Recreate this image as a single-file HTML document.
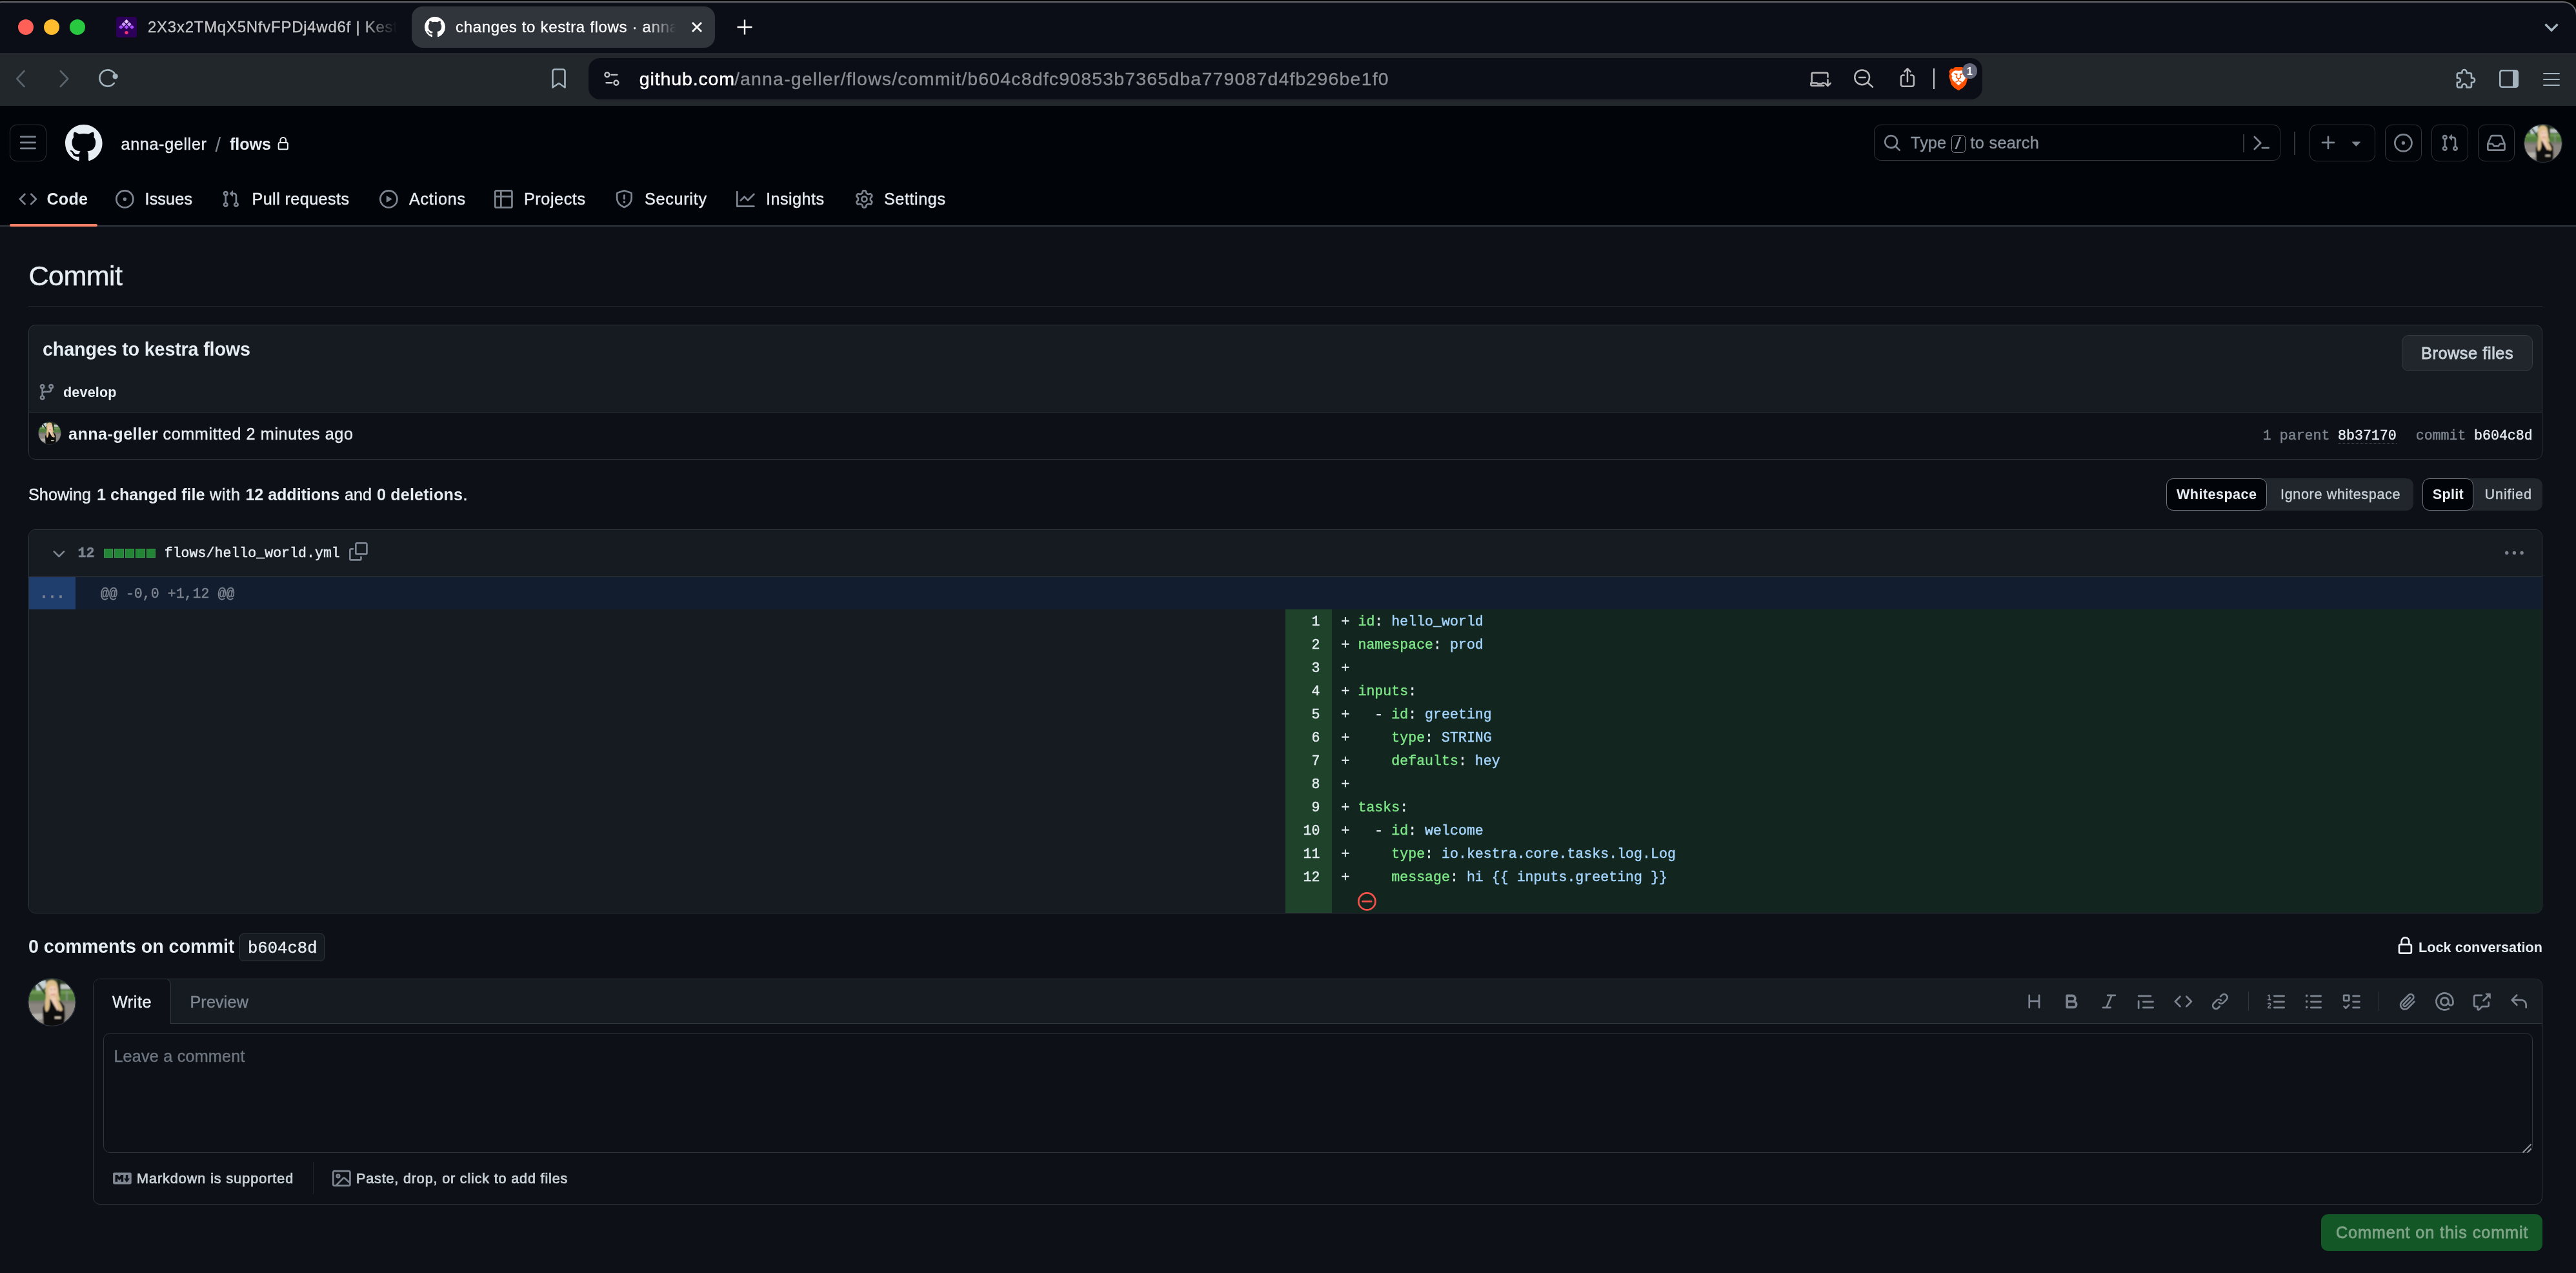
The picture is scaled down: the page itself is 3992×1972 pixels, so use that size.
<!DOCTYPE html>
<html lang="en"><head><meta charset="utf-8"><title>changes to kestra flows · anna-geller/flows@b604c8d</title>
<style>
html,body{margin:0;padding:0;background:#0d1117;}
body{width:3992px;height:1972px;overflow:hidden;position:relative;font-family:"Liberation Sans", Arial, sans-serif;color:#e6edf3;-webkit-font-smoothing:antialiased;}
#root{will-change:transform;position:absolute;left:0;top:0;width:3992px;height:1972px;overflow:hidden;background:#0d1117;}
#root div,#root .i,#root .t{position:absolute;box-sizing:border-box;}
.t{white-space:pre;margin:0;padding:0;font-weight:400;display:block;}
.m{font-family:"Liberation Mono", "DejaVu Sans Mono", monospace;-webkit-text-stroke:0.42px currentColor;}
.i{display:block;overflow:visible;}
</style></head>
<body><div id="root">
<section class="browser-chrome">
<div class="tabbar" style="left:0px;top:0px;width:3992px;height:82px;background:#0b0e16;"></div>
<div style="left:0px;top:0px;width:3992px;height:2px;background:#000;"></div>
<div style="left:0px;top:2px;width:3992px;height:2px;background:#66686e;"></div>
<div style="left:-9px;top:2px;width:47px;height:40px;border-top:2px solid #66686e;border-left:2px solid #66686e;border-top-left-radius:12px;background:#0b0e16;box-shadow:-10px -10px 0 10px #000;"></div>
<div style="left:3954px;top:2px;width:40px;height:40px;border-top:2px solid #66686e;border-right:2px solid #66686e;border-top-right-radius:22px;background:#0b0e16;box-shadow:10px -10px 0 10px #000;"></div>
<div class="toolbar" style="left:0px;top:82px;width:3992px;height:82px;background:#22272b;"></div>
<div style="left:28px;top:30px;width:24px;height:24px;background:#fe5f57;border-radius:50%;"></div>
<div style="left:68px;top:30px;width:24px;height:24px;background:#febc2e;border-radius:50%;"></div>
<div style="left:108px;top:30px;width:24px;height:24px;background:#28c840;border-radius:50%;"></div>
<svg class="i" style="left:180px;top:26px" width="32" height="32" viewBox="0 0 32 32"><rect width="32" height="32" rx="3.5" fill="#2c0059"/><g transform="translate(16 0)"><rect x="-2.45" y="-2.45" width="4.9" height="4.9" rx="0.5" transform="translate(0 7.4) rotate(45)" fill="#e5c8ff"/><rect x="-2.45" y="-2.45" width="4.9" height="4.9" rx="0.5" transform="translate(-4.3 11.7) rotate(45)" fill="#cd9bff"/><rect x="-2.45" y="-2.45" width="4.9" height="4.9" rx="0.5" transform="translate(4.3 11.7) rotate(45)" fill="#cd9bff"/><rect x="-2.45" y="-2.45" width="4.9" height="4.9" rx="0.5" transform="translate(-8.5 16) rotate(45)" fill="#a950ff"/><rect x="-2.45" y="-2.45" width="4.9" height="4.9" rx="0.5" transform="translate(0 16) rotate(45)" fill="#a950ff"/><rect x="-2.45" y="-2.45" width="4.9" height="4.9" rx="0.5" transform="translate(8.5 16) rotate(45)" fill="#a950ff"/><circle cx="0" cy="24.6" r="2.6" fill="#f62e76"/></g></svg>
<span id="t0" class="t" style="top:29.68px;font-size:24px;line-height:24px;color:#c6c7c9;left:229px;-webkit-text-stroke:0.3px #c6c7c9;letter-spacing:0.737px;">2X3x2TMqX5NfvFPDj4wd6f | Kest</span>
<div style="left:560px;top:20px;width:60px;height:44px;background:linear-gradient(90deg,rgba(11,14,22,0),#0b0e16 92%);"></div>
<div class="tab-active" style="left:638px;top:10px;width:470px;height:64px;background:#2f353b;border-radius:17px;"></div>
<svg class="i" style="left:658px;top:26px" width="32" height="32" viewBox="0 0 16 16" fill="#fff"><path d="M8 0c4.42 0 8 3.58 8 8a8.013 8.013 0 0 1-5.45 7.59c-.4.08-.55-.17-.55-.38 0-.27.01-1.13.01-2.2 0-.75-.25-1.23-.54-1.48 1.78-.2 3.65-.88 3.65-3.95 0-.88-.31-1.59-.82-2.15.08-.2.36-1.02-.08-2.12 0 0-.67-.22-2.2.82-.64-.18-1.32-.27-2-.27-.68 0-1.36.09-2 .27-1.53-1.03-2.2-.82-2.2-.82-.44 1.1-.16 1.92-.08 2.12-.51.56-.82 1.28-.82 2.15 0 3.06 1.86 3.75 3.64 3.95-.23.2-.44.55-.51 1.07-.46.21-1.61.55-2.33-.66-.15-.24-.6-.83-1.23-.82-.67.01-.27.38.01.53.34.19.73.9.82 1.13.16.45.68 1.31 2.69.94 0 .67.01 1.3.01 1.49 0 .21-.15.45-.55.38A7.995 7.995 0 0 1 0 8c0-4.42 3.58-8 8-8Z"/></svg>
<span id="t1" class="t" style="top:29.68px;font-size:24px;line-height:24px;color:#fff;left:706px;-webkit-text-stroke:0.3px #fff;letter-spacing:0.672px;">changes to kestra flows · anna</span>
<div style="left:1000px;top:20px;width:52px;height:44px;background:linear-gradient(90deg,rgba(47,53,59,0),#2f353b 92%);"></div>
<svg class="i" style="left:1070px;top:32px" width="20" height="20" viewBox="0 0 20 20"><path d="M3 3 17 17M17 3 3 17" stroke="#fff" stroke-width="2.800" fill="none"/></svg>
<svg class="i" style="left:1141px;top:29px" width="26" height="26" viewBox="0 0 26 26"><path d="M13 1.5V24.5M1.5 13H24.5" stroke="#fff" stroke-width="2.400" fill="none"/></svg>
<svg class="i" style="left:3942px;top:35px" width="24" height="16" viewBox="0 0 24 16"><path d="M2.5 2.5 12 12 21.500 2.500" stroke="#a4b4be" stroke-width="3.4" fill="none"/></svg>
<svg class="i" style="left:22px;top:106px" width="20" height="32" viewBox="0 0 20 32"><path d="M15.5 4 4.2 16 15.5 28" stroke="#59646c" stroke-width="2.6" fill="none" stroke-linejoin="round" stroke-linecap="round"/></svg>
<svg class="i" style="left:90px;top:106px" width="20" height="32" viewBox="0 0 20 32"><path d="M3.8 4 15.2 16 3.8 28" stroke="#59646c" stroke-width="2.600" fill="none" stroke-linejoin="round" stroke-linecap="round"/></svg>
<svg class="i" style="left:150px;top:104.3px" width="34" height="34" viewBox="0 0 34 34"><path d="M29.250 14.060A12.600 12.600 0 1 0 26.900 24.800" stroke="#a4b4be" stroke-width="2.600" fill="none" stroke-linecap="round"/><circle cx="28.600" cy="14.300" r="4.100" fill="#a4b4be"/></svg>
<svg class="i" style="left:853px;top:105px" width="26" height="34" viewBox="0 0 26 34"><path d="M3.500 5.500a3 3 0 0 1 3-3h13a3 3 0 0 1 3 3V30.500L13 24 3.500 30.500Z" stroke="#a4b4be" stroke-width="2.600" fill="none" stroke-linejoin="round"/></svg>
<div class="urlbar" style="left:912px;top:90px;width:2160px;height:64px;background:#0b0e16;border-radius:18px;"></div>
<svg class="i" style="left:934px;top:108px" width="28" height="28" viewBox="0 0 28 28"><g stroke="#c3c6cb" stroke-width="2.300" fill="none" stroke-linecap="round"><circle cx="6.900" cy="7.800" r="3.500"/><path d="M13.300 7.800H22.500"/><circle cx="20.900" cy="20.250" r="3.500"/><path d="M5.400 20.250H14.500"/></g></svg>
<span id="t2" class="t" style="top:107.67px;font-size:28.5px;line-height:28.5px;color:#fff;left:990.8px;-webkit-text-stroke:0.5px #fff;letter-spacing:0.864px;">github.com</span>
<span id="t3" class="t" style="top:107.67px;font-size:28.5px;line-height:28.5px;color:#8b8e94;left:1138px;-webkit-text-stroke:0.35px #8b8e94;letter-spacing:1.162px;">/anna-geller/flows/commit/b604c8dfc90853b7365dba779087d4fb296be1f0</span>
<svg class="i" style="left:2790px;top:95px" width="200" height="55" viewBox="0 0 200 55"><g stroke="#b9b9bb" stroke-width="2.500" fill="none" stroke-linecap="round" stroke-linejoin="round"><path d="M17.700 31.500V19.700a2 2 0 0 1 2-2H40.500a2 2 0 0 1 2 2V24.600"/><path d="M16.300 33.400H25.600l1.500 1.400H33l1.500-1.400H36.300M16.300 33.400V35.800a2 2 0 0 0 2 2H36.300"/><path d="M42.500 28.400V37.600M38.200 33.900 42.500 38.200 46.800 33.900"/><circle cx="95.650" cy="24.800" r="11.400"/><path d="M91.100 25H100.600M104.200 33 112 39.700"/><path d="M160.700 21.400H159a3 3 0 0 0-3 3V35.800a3 3 0 0 0 3 3H172.900a3 3 0 0 0 3-3V24.400a3 3 0 0 0-3-3H171.200"/><path d="M165.950 31.200V11.600M161.200 16.200 165.950 11.400 170.700 16.200"/></g></svg>
<div style="left:2996px;top:106px;width:2.2px;height:32px;background:#c4c7c9;"></div>
<svg class="i" style="left:3020px;top:104px" width="30.4" height="36.3" viewBox="0 0 30.4 36.3"><path d="M15.200 0H21L23.500 2.800 27 2.200 30 6.500 29 10.500 30.200 14 26.500 27 22 32 15.200 36.300 8.400 32 3.900 27 0.200 14 1.400 10.500 0.400 6.500 3.400 2.200 6.900 2.800 9.400 0Z" fill="#ff5000"/><path d="M15.200 5.700 20.500 5.300 24 7 26.600 11 25 14.500 26 17 23.500 21 19.500 24.500 15.200 28.300 10.900 24.500 6.900 21 4.400 17 5.400 14.500 3.800 11 6.400 7 9.900 5.300Z" fill="#fff"/><path d="M7.800 9.300 13.600 10.300 13 12.800 9.600 11.600ZM22.600 9.300 16.800 10.300 17.400 12.800 20.800 11.600Z" fill="#ff5000"/><path d="M12.600 12.600 12 16.200 15.200 18.300 18.400 16.200 17.800 12.600M10.500 23.400 15.200 20.800 19.900 23.400M15.200 18.300V20.800" stroke="#ff5000" stroke-width="1.500" fill="none"/></svg>
<div style="left:3040.6px;top:98.2px;width:23.4px;height:23.4px;background:#646779;border-radius:50%;"></div>
<span id="t4" class="t" style="top:101.93px;font-size:16.5px;line-height:16.5px;color:#fff;left:3047.7px;font-weight:700;">1</span>
<svg class="i" style="left:3804.4px;top:104.3px" width="34.6" height="34.6" viewBox="0 0 32 32"><path d="M3.5 10.500a2 2 0 0 1 2-2h5v-1.500a3.250 3.250 0 0 1 6.500 0v1.500h5a2 2 0 0 1 2 2v5h1.500a3.250 3.250 0 0 1 0 6.500h-1.500v5a2 2 0 0 1-2 2h-5v-1.500a3.250 3.250 0 0 0-6.500 0v1.500h-5a2 2 0 0 1-2-2v-5h1.500a3.250 3.250 0 0 0 0-6.500h-1.500Z" stroke="#a4b4be" stroke-width="2.400" fill="none" stroke-linejoin="round"/></svg>
<svg class="i" style="left:3873px;top:108px" width="30" height="28" viewBox="0 0 30 28"><rect x="1.300" y="1.300" width="27.400" height="25.400" rx="3" stroke="#a4b4be" stroke-width="2.600" fill="none"/><path d="M21 1.500h5.500a2 2 0 0 1 2 2v21a2 2 0 0 1-2 2H21Z" fill="#a4b4be"/></svg>
<div style="left:3941px;top:112.7px;width:26px;height:2.6px;background:#a4b4be;border-radius:1.300px;"></div>
<div style="left:3941px;top:121.7px;width:26px;height:2.6px;background:#a4b4be;border-radius:1.300px;"></div>
<div style="left:3941px;top:130.7px;width:26px;height:2.6px;background:#a4b4be;border-radius:1.300px;"></div>
</section>
<header class="AppHeader">
<div class="AppHeader" style="left:0px;top:164px;width:3992px;height:187px;background:#010409;border-bottom:2px solid #30363d;"></div>
<div class="btn" style="left:15px;top:193px;width:57px;height:57px;border:1px solid #30363d;border-radius:10.8px;"></div>
<svg class="i" style="left:29.4px;top:207.4px" width="28.8" height="28.8" viewBox="0 0 16 16" fill="#7d8590"><path d="M1 2.75A.75.75 0 0 1 1.75 2h12.5a.75.75 0 0 1 0 1.5H1.75A.75.75 0 0 1 1 2.75Zm0 5A.75.75 0 0 1 1.75 7h12.5a.75.75 0 0 1 0 1.5H1.75A.75.75 0 0 1 1 7.75ZM1.75 12h12.5a.75.75 0 0 1 0 1.5H1.75a.75.75 0 0 1 0-1.5Z"/></svg>
<svg class="i" style="left:101px;top:193px" width="57.6" height="57.6" viewBox="0 0 16 16" fill="#e6edf3"><path d="M8 0c4.42 0 8 3.58 8 8a8.013 8.013 0 0 1-5.45 7.59c-.4.08-.55-.17-.55-.38 0-.27.01-1.13.01-2.2 0-.75-.25-1.23-.54-1.48 1.78-.2 3.65-.88 3.65-3.95 0-.88-.31-1.59-.82-2.15.08-.2.36-1.02-.08-2.12 0 0-.67-.22-2.2.82-.64-.18-1.32-.27-2-.27-.68 0-1.36.09-2 .27-1.53-1.03-2.2-.82-2.2-.82-.44 1.1-.16 1.92-.08 2.12-.51.56-.82 1.28-.82 2.15 0 3.06 1.86 3.75 3.64 3.95-.23.2-.44.55-.51 1.07-.46.21-1.61.55-2.33-.66-.15-.24-.6-.83-1.23-.82-.67.01-.27.38.01.53.34.19.73.9.82 1.13.16.45.68 1.31 2.69.94 0 .67.01 1.3.01 1.49 0 .21-.15.45-.55.38A7.995 7.995 0 0 1 0 8c0-4.42 3.58-8 8-8Z"/></svg>
<span id="t5" class="t" style="top:210.67px;font-size:25.2px;line-height:25.2px;color:#e6edf3;left:187.5px;-webkit-text-stroke:0.4px #e6edf3;letter-spacing:0.647px;">anna-geller</span>
<span id="t6" class="t" style="top:208.76px;font-size:31px;line-height:31px;color:#7d8590;left:333.6px;-webkit-text-stroke:0.01px #7d8590;">/</span>
<span id="t7" class="t" style="top:210.67px;font-size:25.2px;line-height:25.2px;color:#e6edf3;left:356px;font-weight:700;letter-spacing:-0.094px;">flows</span>
<svg class="i" style="left:428.3px;top:211.6px" width="21.6" height="21.6" viewBox="0 0 16 16" fill="#e6edf3"><path d="M4 4a4 4 0 0 1 8 0v2h.25c.966 0 1.75.784 1.75 1.75v5.5A1.75 1.75 0 0 1 12.25 15h-8.5A1.75 1.75 0 0 1 2 13.25v-5.5C2 6.784 2.784 6 3.75 6H4Zm8.25 3.5h-8.5a.25.25 0 0 0-.25.25v5.5c0 .138.112.25.25.25h8.5a.25.25 0 0 0 .25-.25v-5.5a.25.25 0 0 0-.25-.25ZM10.5 6V4a2.5 2.5 0 1 0-5 0v2Z"/></svg>
<svg class="i" style="left:29px;top:294.2px" width="28.8" height="28.8" viewBox="0 0 16 16" fill="#7d8590"><path d="m11.28 3.22 4.25 4.25a.75.75 0 0 1 0 1.06l-4.25 4.25a.749.749 0 0 1-1.275-.326.749.749 0 0 1 .215-.734L13.94 8l-3.72-3.72a.749.749 0 0 1 .326-1.275.749.749 0 0 1 .734.215Zm-6.56 0a.751.751 0 0 1 1.042.018.751.751 0 0 1 .018 1.042L2.06 8l3.72 3.72a.749.749 0 0 1-.326 1.275.749.749 0 0 1-.734-.215L.47 8.53a.75.75 0 0 1 0-1.06Z"/></svg>
<span id="t8" class="t" style="top:296.17px;font-size:25.2px;line-height:25.2px;color:#e6edf3;left:72.5px;font-weight:700;letter-spacing:0.177px;">Code</span>
<svg class="i" style="left:179px;top:294.2px" width="28.8" height="28.8" viewBox="0 0 16 16" fill="#7d8590"><path d="M8 9.5a1.5 1.5 0 1 0 0-3 1.5 1.5 0 0 0 0 3ZM8 0a8 8 0 1 1 0 16A8 8 0 0 1 8 0ZM1.5 8a6.5 6.5 0 1 0 13 0 6.5 6.5 0 0 0-13 0Z"/></svg>
<span id="t9" class="t" style="top:296.17px;font-size:25.2px;line-height:25.2px;color:#e6edf3;left:224.5px;-webkit-text-stroke:0.4px #e6edf3;letter-spacing:0.141px;">Issues</span>
<svg class="i" style="left:343px;top:294.2px" width="28.8" height="28.8" viewBox="0 0 16 16" fill="#7d8590"><path d="M1.5 3.25a2.25 2.25 0 1 1 3 2.122v5.256a2.251 2.251 0 1 1-1.5 0V5.372A2.25 2.25 0 0 1 1.5 3.25Zm5.677-.177L9.573.677A.25.25 0 0 1 10 .854V2.5h1A2.5 2.5 0 0 1 13.5 5v5.628a2.251 2.251 0 1 1-1.5 0V5a1 1 0 0 0-1-1h-1v1.646a.25.25 0 0 1-.427.177L7.177 3.427a.25.25 0 0 1 0-.354ZM3.75 2.5a.75.75 0 1 0 0 1.5.75.75 0 0 0 0-1.5Zm0 9.5a.75.75 0 1 0 0 1.5.75.75 0 0 0 0-1.5Zm8.25.75a.75.75 0 1 0 1.5 0 .75.75 0 0 0-1.5 0Z"/></svg>
<span id="t10" class="t" style="top:296.17px;font-size:25.2px;line-height:25.2px;color:#e6edf3;left:390.5px;-webkit-text-stroke:0.4px #e6edf3;letter-spacing:0.408px;">Pull requests</span>
<svg class="i" style="left:587.5px;top:294.2px" width="28.8" height="28.8" viewBox="0 0 16 16" fill="#7d8590"><path d="M8 0a8 8 0 1 1 0 16A8 8 0 0 1 8 0ZM1.5 8a6.5 6.5 0 1 0 13 0 6.5 6.5 0 0 0-13 0Zm4.879-2.773 4.264 2.559a.25.25 0 0 1 0 .428l-4.264 2.559A.25.25 0 0 1 6 10.559V5.442a.25.25 0 0 1 .379-.215Z"/></svg>
<span id="t11" class="t" style="top:296.17px;font-size:25.2px;line-height:25.2px;color:#e6edf3;left:634px;-webkit-text-stroke:0.4px #e6edf3;letter-spacing:0.732px;">Actions</span>
<svg class="i" style="left:765.5px;top:294.2px" width="28.8" height="28.8" viewBox="0 0 16 16" fill="#7d8590"><path d="M0 1.75C0 .784.784 0 1.75 0h12.5C15.216 0 16 .784 16 1.75v12.5A1.75 1.75 0 0 1 14.25 16H1.75A1.75 1.75 0 0 1 0 14.25ZM6.5 6.5v8h7.75a.25.25 0 0 0 .25-.25V6.5Zm8-1.5V1.75a.25.25 0 0 0-.25-.25H6.5V5Zm-13 1.5v7.75c0 .138.112.25.25.25H5v-8ZM5 5V1.5H1.75a.25.25 0 0 0-.25.25V5Z"/></svg>
<span id="t12" class="t" style="top:296.17px;font-size:25.2px;line-height:25.2px;color:#e6edf3;left:812px;-webkit-text-stroke:0.4px #e6edf3;letter-spacing:0.571px;">Projects</span>
<svg class="i" style="left:953px;top:294.2px" width="28.8" height="28.8" viewBox="0 0 16 16" fill="#7d8590"><path d="M7.467.133a1.748 1.748 0 0 1 1.066 0l5.25 1.68A1.75 1.75 0 0 1 15 3.48V7c0 1.566-.32 3.182-1.303 4.682-.983 1.498-2.585 2.813-5.032 3.855a1.697 1.697 0 0 1-1.33 0c-2.447-1.042-4.049-2.357-5.032-3.855C1.32 10.182 1 8.566 1 7V3.48a1.75 1.75 0 0 1 1.217-1.667Zm.61 1.429a.25.25 0 0 0-.153 0l-5.25 1.68a.25.25 0 0 0-.174.238V7c0 1.358.275 2.666 1.057 3.86.784 1.194 2.121 2.34 4.366 3.297a.196.196 0 0 0 .154 0c2.245-.956 3.582-2.104 4.366-3.298C13.225 9.666 13.5 8.36 13.5 7V3.48a.251.251 0 0 0-.174-.237l-5.25-1.68ZM8.75 4.75v3a.75.75 0 0 1-1.5 0v-3a.75.75 0 0 1 1.5 0ZM9 10.5a1 1 0 1 1-2 0 1 1 0 0 1 2 0Z"/></svg>
<span id="t13" class="t" style="top:296.17px;font-size:25.2px;line-height:25.2px;color:#e6edf3;left:999px;-webkit-text-stroke:0.4px #e6edf3;letter-spacing:0.714px;">Security</span>
<svg class="i" style="left:1140.5px;top:294.2px" width="28.8" height="28.8" viewBox="0 0 16 16" fill="#7d8590"><path d="M1.5 1.75V13.5h13.75a.75.75 0 0 1 0 1.5H.75a.75.75 0 0 1-.75-.75V1.75a.75.75 0 0 1 1.5 0Zm14.28 2.53-5.25 5.25a.75.75 0 0 1-1.06 0L7 7.06 4.28 9.78a.751.751 0 0 1-1.042-.018.751.751 0 0 1-.018-1.042l3.25-3.25a.75.75 0 0 1 1.06 0L10 7.94l4.72-4.72a.751.751 0 0 1 1.042.018.751.751 0 0 1 .018 1.042Z"/></svg>
<span id="t14" class="t" style="top:296.17px;font-size:25.2px;line-height:25.2px;color:#e6edf3;left:1187px;-webkit-text-stroke:0.4px #e6edf3;letter-spacing:0.455px;">Insights</span>
<svg class="i" style="left:1324.5px;top:294.2px" width="28.8" height="28.8" viewBox="0 0 16 16" fill="#7d8590"><path d="M8 0a8.2 8.2 0 0 1 .701.031C9.444.095 9.99.645 10.16 1.29l.288 1.107c.018.066.079.158.212.224.231.114.454.243.668.386.123.082.233.09.299.071l1.103-.303c.644-.176 1.392.021 1.82.63.27.385.506.792.704 1.218.315.675.111 1.422-.364 1.891l-.814.806c-.049.048-.098.147-.088.294.016.257.016.515 0 .772-.01.147.038.246.088.294l.814.806c.475.469.679 1.216.364 1.891a7.977 7.977 0 0 1-.704 1.217c-.428.61-1.176.807-1.82.63l-1.102-.302c-.067-.019-.177-.011-.3.071a5.909 5.909 0 0 1-.668.386c-.133.066-.194.158-.211.224l-.29 1.106c-.168.646-.715 1.196-1.458 1.26a8.006 8.006 0 0 1-1.402 0c-.743-.064-1.289-.614-1.458-1.26l-.289-1.106c-.018-.066-.079-.158-.212-.224a5.738 5.738 0 0 1-.668-.386c-.123-.082-.233-.09-.299-.071l-1.103.303c-.644.176-1.392-.021-1.82-.63a8.12 8.12 0 0 1-.704-1.218c-.315-.675-.111-1.422.363-1.891l.815-.806c.05-.048.098-.147.088-.294a6.214 6.214 0 0 1 0-.772c.01-.147-.038-.246-.088-.294l-.815-.806C.635 6.045.431 5.298.746 4.623a7.920 7.920 0 0 1 .704-1.217c.428-.61 1.176-.807 1.82-.63l1.102.302c.067.019.177.011.3-.071.214-.143.437-.272.668-.386.133-.066.194-.158.211-.224l.29-1.106C6.009.645 6.556.095 7.299.03 7.530.01 7.764 0 8 0Zm-.571 1.525c-.036.003-.108.036-.137.146l-.289 1.105c-.147.561-.549.967-.998 1.189-.173.086-.34.183-.5.29-.417.278-.97.423-1.529.27l-1.103-.303c-.109-.03-.175.016-.195.045-.22.312-.412.644-.573.99-.014.031-.021.11.059.19l.815.806c.411.406.562.957.53 1.456a4.709 4.709 0 0 0 0 .582c.032.499-.119 1.05-.53 1.456l-.815.806c-.081.08-.073.159-.059.19.162.346.353.677.573.989.02.03.085.076.195.046l1.102-.303c.56-.153 1.113-.008 1.53.27.161.107.328.204.501.29.447.222.85.629.997 1.189l.289 1.105c.029.109.101.143.137.146a6.600 6.600 0 0 0 1.142 0c.036-.003.108-.036.137-.146l.289-1.105c.147-.561.549-.967.998-1.189.173-.086.34-.183.5-.29.417-.278.97-.423 1.529-.27l1.103.303c.109.029.175-.016.195-.045.22-.313.411-.644.573-.99.014-.031.021-.11-.059-.19l-.815-.806c-.411-.406-.562-.957-.53-1.456a4.709 4.709 0 0 0 0-.582c-.032-.499.119-1.05.53-1.456l.815-.806c.081-.08.073-.159.059-.19a6.464 6.464 0 0 0-.573-.989c-.02-.03-.085-.076-.195-.046l-1.102.303c-.56.153-1.113.008-1.53-.27a4.440 4.440 0 0 0-.501-.29c-.447-.222-.85-.629-.997-1.189l-.289-1.105c-.029-.11-.101-.143-.137-.146a6.600 6.600 0 0 0-1.142 0ZM11 8a3 3 0 1 1-6 0 3 3 0 0 1 6 0ZM9.500 8a1.500 1.500 0 1 0-3.001.001A1.500 1.500 0 0 0 9.500 8Z"/></svg>
<span id="t15" class="t" style="top:296.17px;font-size:25.2px;line-height:25.2px;color:#e6edf3;left:1370px;-webkit-text-stroke:0.4px #e6edf3;letter-spacing:0.569px;">Settings</span>
<div style="left:15px;top:347px;width:136px;height:4px;background:#f78166;border-radius:3.6px;"></div>
<div class="search" style="left:2904px;top:193px;width:630px;height:55.6px;border:1px solid #30363d;border-radius:10.8px;"></div>
<svg class="i" style="left:2918px;top:207.4px" width="28.8" height="28.8" viewBox="0 0 16 16" fill="#7d8590"><path d="M10.68 11.74a6 6 0 0 1-7.922-8.982 6 6 0 0 1 8.982 7.922l3.04 3.04a.749.749 0 0 1-.326 1.275.749.749 0 0 1-.734-.215ZM11.5 7a4.499 4.499 0 1 0-8.997 0A4.499 4.499 0 0 0 11.5 7Z"/></svg>
<span id="t16" class="t" style="top:209.07px;font-size:25.2px;line-height:25.2px;color:#8b949e;left:2961px;-webkit-text-stroke:0.4px #8b949e;letter-spacing:0.130px;">Type</span>
<div style="left:3024px;top:208.8px;width:22px;height:28px;border:1px solid #7d8590;border-radius:5.4px;"></div>
<span id="t17" class="t" style="top:210.44px;font-size:25px;line-height:25px;color:#8b949e;left:3031px;-webkit-text-stroke:0.01px #8b949e;transform:scaleX(1.4);transform-origin:50% 50%;">/</span>
<span id="t18" class="t" style="top:209.07px;font-size:25.2px;line-height:25.2px;color:#8b949e;left:3053.5px;-webkit-text-stroke:0.4px #8b949e;letter-spacing:0.324px;">to search</span>
<div style="left:3476px;top:207.5px;width:1.8px;height:28px;background:#30363d;"></div>
<svg class="i" style="left:3490px;top:207.4px" width="28.8" height="28.8" viewBox="0 0 16 16" fill="#7d8590"><path d="m6.354 8.04-4.773 4.773a.75.75 0 1 0 1.061 1.06L7.945 8.57a.75.75 0 0 0 0-1.06L2.642 2.206a.75.75 0 0 0-1.06 1.061L6.353 8.04ZM8.75 11.5a.75.75 0 0 0 0 1.5h5.5a.75.75 0 0 0 0-1.5h-5.5Z"/></svg>
<div style="left:3555px;top:203.8px;width:1.8px;height:36.4px;background:#30363d;"></div>
<div class="btn" style="left:3579px;top:193px;width:102px;height:57px;border:1px solid #30363d;border-radius:10.8px;"></div>
<svg class="i" style="left:3594px;top:207.4px" width="28.8" height="28.8" viewBox="0 0 16 16" fill="#7d8590"><path d="M7.75 2a.75.75 0 0 1 .75.75V7h4.25a.75.75 0 0 1 0 1.5H8.5v4.25a.75.75 0 0 1-1.5 0V8.5H2.75a.75.75 0 0 1 0-1.5H7V2.75A.75.75 0 0 1 7.75 2Z"/></svg>
<svg class="i" style="left:3636.8px;top:207.4px" width="28.8" height="28.8" viewBox="0 0 16 16" fill="#7d8590"><path d="m4.427 7.427 3.396 3.396a.25.25 0 0 0 .354 0l3.396-3.396A.25.25 0 0 0 11.396 7H4.604a.25.25 0 0 0-.177.427Z"/></svg>
<div class="btn" style="left:3696px;top:193px;width:57px;height:57px;border:1px solid #30363d;border-radius:10.8px;"></div>
<svg class="i" style="left:3710.4px;top:207.4px" width="28.8" height="28.8" viewBox="0 0 16 16" fill="#7d8590"><path d="M8 9.5a1.5 1.5 0 1 0 0-3 1.5 1.5 0 0 0 0 3ZM8 0a8 8 0 1 1 0 16A8 8 0 0 1 8 0ZM1.5 8a6.5 6.5 0 1 0 13 0 6.5 6.5 0 0 0-13 0Z"/></svg>
<div class="btn" style="left:3768px;top:193px;width:57px;height:57px;border:1px solid #30363d;border-radius:10.8px;"></div>
<svg class="i" style="left:3782.4px;top:207.4px" width="28.8" height="28.8" viewBox="0 0 16 16" fill="#7d8590"><path d="M1.5 3.25a2.25 2.25 0 1 1 3 2.122v5.256a2.251 2.251 0 1 1-1.5 0V5.372A2.25 2.25 0 0 1 1.5 3.25Zm5.677-.177L9.573.677A.25.25 0 0 1 10 .854V2.5h1A2.5 2.5 0 0 1 13.5 5v5.628a2.251 2.251 0 1 1-1.5 0V5a1 1 0 0 0-1-1h-1v1.646a.25.25 0 0 1-.427.177L7.177 3.427a.25.25 0 0 1 0-.354ZM3.75 2.5a.75.75 0 1 0 0 1.5.75.75 0 0 0 0-1.5Zm0 9.5a.75.75 0 1 0 0 1.5.75.75 0 0 0 0-1.5Zm8.25.75a.75.75 0 1 0 1.5 0 .75.75 0 0 0-1.5 0Z"/></svg>
<div class="btn" style="left:3840px;top:193px;width:57px;height:57px;border:1px solid #30363d;border-radius:10.8px;"></div>
<svg class="i" style="left:3854.4px;top:207.4px" width="28.8" height="28.8" viewBox="0 0 16 16" fill="#7d8590"><path d="M2.8 2.06A1.75 1.75 0 0 1 4.41 1h7.18c.7 0 1.333.417 1.61 1.06l2.74 6.395c.04.093.06.194.06.295v4.5A1.75 1.75 0 0 1 14.25 15H1.75A1.75 1.75 0 0 1 0 13.25v-4.5c0-.101.02-.202.06-.295Zm1.61.44a.25.25 0 0 0-.23.152L1.887 8H4.75a.75.75 0 0 1 .6.3L6.625 10h2.75l1.275-1.7a.75.75 0 0 1 .6-.3h2.863L11.82 2.652a.25.25 0 0 0-.23-.152Zm10.09 7h-2.875l-1.275 1.7a.75.75 0 0 1-.6.3h-3.5a.75.75 0 0 1-.6-.3L4.375 9.5H1.5v3.75c0 .138.112.25.25.25h12.5a.25.25 0 0 0 .25-.25Z"/></svg>
<svg class="i" style="left:3911px;top:191.5px" width="60" height="60" viewBox="0 0 100 100"><defs><clipPath id="avc"><circle cx="50" cy="50" r="48.6"/></clipPath><filter id="avc-b" x="-10%" y="-10%" width="120%" height="120%"><feGaussianBlur stdDeviation="1.5"/></filter></defs><g clip-path="url(#avc)"><g filter="url(#avc-b)"><rect x="-5" y="-5" width="110" height="110" fill="#8b8680"/><rect x="-5" y="-5" width="110" height="53" fill="#557f40"/><rect x="-5" y="-5" width="110" height="29" fill="#33452b"/><path d="M-5 26H105V33H-5Z" fill="#6d9953"/><path d="M16 12 26 5 37 5 38 17 30 26 18 26Z" fill="#c4d3d6"/><path d="M68 13H88V23H68Z" fill="#bcc3c0"/><path d="M61 0H68L67 38H63Z" fill="#1f261c"/><path d="M22 10 38 32 35 34 19 13Z" fill="#1f2a1c"/><rect x="79.500" y="27" width="2.500" height="21" fill="#8e958c"/><path d="M-5 47H105V53H-5Z" fill="#7a786f"/><path d="M-5 75 34 73 34 84 -5 92Z" fill="#b4b1ab"/><path d="M37 15C39 3 55 0 60 11C64 22 63 36 67 47L36 47C40 36 35 27 37 15Z" fill="#dbbd8c"/><path d="M44 44 58 43 68 48 76 58 77 80 74 105 33 105 31 76 31 62 36 51Z" fill="#0c0c0f"/><path d="M45 40 60 40 64 66 61 67Z" fill="#eecbb5"/><path d="M38 40C36 50 33 60 38 70C43 69 46 60 45.500 50L46 40ZM60 38C62 46 70 55 72 65C70 70 66 69 64 66C62 58 60 52 58 46Z" fill="#dbbd8c"/><ellipse cx="51.500" cy="27" rx="8.800" ry="12" fill="#efcdb7"/><path d="M43.500 21C45 11 57 10 60 20C55 15.500 48 15.500 43.500 21Z" fill="#e2c190"/><path d="M47.500 33.500q4.500 3.500 9-0.500" stroke="#c4605c" stroke-width="1.600" fill="none"/><path d="M46.500 23.500h3.500M54 23h3.500" stroke="#8a6a55" stroke-width="1.200"/><rect x="56" y="80" width="12.500" height="4" fill="#cdc3ae"/></g></g><circle cx="50" cy="50" r="49.1" fill="none" stroke="#2a303a" stroke-width="1.800"/></svg>
</header>
<main class="commit-page">
<h1 id="t19" class="t" style="top:405.93px;font-size:43.2px;line-height:43.2px;color:#e6edf3;left:44.5px;-webkit-text-stroke:0.4px #e6edf3;letter-spacing:-0.653px;">Commit</h1>
<div style="left:44px;top:473.6px;width:3896px;height:1.8px;background:#21262d;"></div>
<div class="commit" style="left:44px;top:503px;width:3896px;height:209px;background:#161b22;border:1px solid #30363d;border-radius:10.8px;overflow:hidden;"><div style="left:0;top:134px;width:100%;height:80px;background:#0d1117;border-top:1px solid #30363d;"></div></div>
<span id="t20" class="t" style="top:526.62px;font-size:28.8px;line-height:28.8px;color:#e6edf3;left:66px;font-weight:700;letter-spacing:-0.203px;">changes to kestra flows</span>
<svg class="i" style="left:58.4px;top:592.7px" width="28.8" height="28.8" viewBox="0 0 16 16" fill="#7d8590"><path d="M9.5 3.25a2.25 2.25 0 1 1 3 2.122V6A2.5 2.5 0 0 1 10 8.5H6a1 1 0 0 0-1 1v1.128a2.251 2.251 0 1 1-1.5 0V5.372a2.25 2.25 0 1 1 1.5 0v1.836A2.493 2.493 0 0 1 6 7h4a1 1 0 0 0 1-1v-.628A2.25 2.25 0 0 1 9.5 3.25Zm-6 0a.75.75 0 1 0 1.5 0 .75.75 0 0 0-1.5 0Zm8.25-.75a.75.75 0 1 0 0 1.5.75.75 0 0 0 0-1.5ZM4.25 12a.75.75 0 1 0 0 1.5.75.75 0 0 0 0-1.5Z"/></svg>
<span id="t21" class="t" style="top:596.72px;font-size:21.6px;line-height:21.6px;color:#e6edf3;left:98px;font-weight:700;letter-spacing:0.148px;">develop</span>
<div class="btn" style="left:3722px;top:519px;width:203px;height:56px;background:#21262d;border:1px solid #363b42;border-radius:10.8px;"></div>
<span id="t22" class="t" style="top:535.07px;font-size:25.2px;line-height:25.2px;color:#c9d1d9;left:3752px;-webkit-text-stroke:0.9px #c9d1d9;letter-spacing:0.620px;">Browse files</span>
<svg class="i" style="left:59px;top:653px" width="36" height="36" viewBox="0 0 100 100"><defs><clipPath id="avd"><circle cx="50" cy="50" r="48.6"/></clipPath><filter id="avd-b" x="-10%" y="-10%" width="120%" height="120%"><feGaussianBlur stdDeviation="1.5"/></filter></defs><g clip-path="url(#avd)"><g filter="url(#avd-b)"><rect x="-5" y="-5" width="110" height="110" fill="#8b8680"/><rect x="-5" y="-5" width="110" height="53" fill="#557f40"/><rect x="-5" y="-5" width="110" height="29" fill="#33452b"/><path d="M-5 26H105V33H-5Z" fill="#6d9953"/><path d="M16 12 26 5 37 5 38 17 30 26 18 26Z" fill="#c4d3d6"/><path d="M68 13H88V23H68Z" fill="#bcc3c0"/><path d="M61 0H68L67 38H63Z" fill="#1f261c"/><path d="M22 10 38 32 35 34 19 13Z" fill="#1f2a1c"/><rect x="79.500" y="27" width="2.500" height="21" fill="#8e958c"/><path d="M-5 47H105V53H-5Z" fill="#7a786f"/><path d="M-5 75 34 73 34 84 -5 92Z" fill="#b4b1ab"/><path d="M37 15C39 3 55 0 60 11C64 22 63 36 67 47L36 47C40 36 35 27 37 15Z" fill="#dbbd8c"/><path d="M44 44 58 43 68 48 76 58 77 80 74 105 33 105 31 76 31 62 36 51Z" fill="#0c0c0f"/><path d="M45 40 60 40 64 66 61 67Z" fill="#eecbb5"/><path d="M38 40C36 50 33 60 38 70C43 69 46 60 45.500 50L46 40ZM60 38C62 46 70 55 72 65C70 70 66 69 64 66C62 58 60 52 58 46Z" fill="#dbbd8c"/><ellipse cx="51.500" cy="27" rx="8.800" ry="12" fill="#efcdb7"/><path d="M43.500 21C45 11 57 10 60 20C55 15.500 48 15.500 43.500 21Z" fill="#e2c190"/><path d="M47.500 33.500q4.500 3.500 9-0.500" stroke="#c4605c" stroke-width="1.600" fill="none"/><path d="M46.500 23.500h3.500M54 23h3.500" stroke="#8a6a55" stroke-width="1.200"/><rect x="56" y="80" width="12.500" height="4" fill="#cdc3ae"/></g></g><circle cx="50" cy="50" r="49.1" fill="none" stroke="#2a303a" stroke-width="1.800"/></svg>
<span id="t23" class="t" style="top:660.07px;font-size:25.2px;line-height:25.2px;color:#e6edf3;left:106px;font-weight:700;letter-spacing:0.432px;">anna-geller</span>
<span id="t24" class="t" style="top:660.07px;font-size:25.2px;line-height:25.2px;color:#e6edf3;left:252.5px;-webkit-text-stroke:0.4px #e6edf3;letter-spacing:0.595px;">committed 2 minutes ago</span>
<span id="t25" class="t m" style="top:665.44px;font-size:21.6px;line-height:21.6px;color:#7d8590;left:3506.8px;">1 parent</span>
<span id="t26" class="t m" style="top:665.44px;font-size:21.6px;line-height:21.6px;color:#e6edf3;left:3623px;">8b37170</span>
<div style="left:3623px;top:686.6px;width:91px;height:1.8px;border-bottom:1.8px dotted #59616b;"></div>
<span id="t27" class="t m" style="top:665.44px;font-size:21.6px;line-height:21.6px;color:#7d8590;left:3743.7px;">commit</span>
<span id="t28" class="t m" style="top:665.44px;font-size:21.6px;line-height:21.6px;color:#e6edf3;left:3834px;">b604c8d</span>
<span id="t29" class="t" style="top:754.17px;font-size:25.2px;line-height:25.2px;color:#e6edf3;left:44px;-webkit-text-stroke:0.4px #e6edf3;letter-spacing:0.062px;">Showing</span>
<span id="t30" class="t" style="top:754.17px;font-size:25.2px;line-height:25.2px;color:#e6edf3;left:150px;font-weight:700;letter-spacing:-0.044px;">1 changed file</span>
<span id="t31" class="t" style="top:754.17px;font-size:25.2px;line-height:25.2px;color:#e6edf3;left:325px;-webkit-text-stroke:0.4px #e6edf3;letter-spacing:0.734px;">with</span>
<span id="t32" class="t" style="top:754.17px;font-size:25.2px;line-height:25.2px;color:#e6edf3;left:380.4px;font-weight:700;letter-spacing:-0.088px;">12 additions</span>
<span id="t33" class="t" style="top:754.17px;font-size:25.2px;line-height:25.2px;color:#e6edf3;left:534px;-webkit-text-stroke:0.4px #e6edf3;letter-spacing:-0.016px;">and</span>
<span id="t34" class="t" style="top:754.17px;font-size:25.2px;line-height:25.2px;color:#e6edf3;left:584px;font-weight:700;letter-spacing:0.142px;">0 deletions</span>
<span id="t35" class="t" style="top:754.17px;font-size:25.2px;line-height:25.2px;color:#e6edf3;left:717.5px;-webkit-text-stroke:0.4px #e6edf3;">.</span>
<div class="segmented" style="left:3357px;top:741px;width:383px;height:50.4px;background:#21262d;border-radius:10.8px;"></div>
<div style="left:3357px;top:741px;width:156px;height:50.4px;background:#010409;border:1px solid #6e7681;border-radius:10.8px;"></div>
<span id="t36" class="t" style="top:754.72px;font-size:21.6px;line-height:21.6px;color:#e6edf3;left:3373px;font-weight:700;letter-spacing:0.444px;">Whitespace</span>
<span id="t37" class="t" style="top:754.72px;font-size:21.6px;line-height:21.6px;color:#c9d1d9;left:3534px;-webkit-text-stroke:0.4px #c9d1d9;letter-spacing:0.640px;">Ignore whitespace</span>
<div class="segmented" style="left:3754px;top:741px;width:186px;height:50.4px;background:#21262d;border-radius:10.8px;"></div>
<div style="left:3754px;top:741px;width:79px;height:50.4px;background:#010409;border:1px solid #6e7681;border-radius:10.8px;"></div>
<span id="t38" class="t" style="top:754.72px;font-size:21.6px;line-height:21.6px;color:#e6edf3;left:3769.8px;font-weight:700;letter-spacing:0.251px;">Split</span>
<span id="t39" class="t" style="top:754.72px;font-size:21.6px;line-height:21.6px;color:#c9d1d9;left:3850.6px;-webkit-text-stroke:0.4px #c9d1d9;letter-spacing:0.864px;">Unified</span>
<div class="file" style="left:44px;top:820px;width:3896px;height:595.4px;background:#0d1117;border:1px solid #30363d;border-radius:10.8px;overflow:hidden;"><div style="left:0;top:0;width:100%;height:73px;background:#161b22;border-bottom:1px solid #30363d;"></div><div style="left:0;top:73px;width:100%;height:50px;background:#121d2f;"></div><div style="left:0;top:73px;width:72px;height:50px;background:#1f3d6d;"></div><div style="left:0;top:123px;width:1947.2px;height:480px;background:#161b22;"></div><div style="left:1947.2px;top:123px;width:71.8px;height:480px;background:#1f432a;"></div><div style="left:2019px;top:123px;width:1900px;height:480px;background:#12261f;"></div></div>
<svg class="i" style="left:76.6px;top:843.6px" width="28.8" height="28.8" viewBox="0 0 16 16" fill="#7d8590"><path d="M12.78 5.22a.749.749 0 0 1 0 1.06l-4.25 4.25a.749.749 0 0 1-1.06 0L3.22 6.28a.749.749 0 1 1 1.06-1.06L8 8.939l3.72-3.719a.749.749 0 0 1 1.06 0Z"/></svg>
<span id="t40" class="t m" style="top:847.44px;font-size:21.6px;line-height:21.6px;color:#7d8590;left:120.5px;font-weight:700;">12</span>
<div style="left:161px;top:850px;width:14.4px;height:14.4px;background:#238636;outline:1px solid rgba(240,246,252,0.1);outline-offset:-1.8px;"></div>
<div style="left:177.4px;top:850px;width:14.4px;height:14.4px;background:#238636;outline:1px solid rgba(240,246,252,0.1);outline-offset:-1.8px;"></div>
<div style="left:193.8px;top:850px;width:14.4px;height:14.4px;background:#238636;outline:1px solid rgba(240,246,252,0.1);outline-offset:-1.8px;"></div>
<div style="left:210.2px;top:850px;width:14.4px;height:14.4px;background:#238636;outline:1px solid rgba(240,246,252,0.1);outline-offset:-1.8px;"></div>
<div style="left:226.6px;top:850px;width:14.4px;height:14.4px;background:#238636;outline:1px solid rgba(240,246,252,0.1);outline-offset:-1.8px;"></div>
<span id="t41" class="t m" style="top:847.44px;font-size:21.6px;line-height:21.6px;color:#e6edf3;left:254.7px;">flows/hello_world.yml</span>
<svg class="i" style="left:541px;top:840px" width="28.8" height="28.8" viewBox="0 0 16 16" fill="#7d8590"><path d="M0 6.75C0 5.784.784 5 1.75 5h1.5a.75.75 0 0 1 0 1.5h-1.5a.25.25 0 0 0-.25.25v7.5c0 .138.112.25.25.25h7.5a.25.25 0 0 0 .25-.25v-1.5a.75.75 0 0 1 1.5 0v1.5A1.75 1.75 0 0 1 9.25 16h-7.5A1.75 1.75 0 0 1 0 14.25ZM5 1.75C5 .784 5.784 0 6.75 0h7.5C15.216 0 16 .784 16 1.75v7.5A1.75 1.75 0 0 1 14.25 11h-7.5A1.75 1.75 0 0 1 5 9.25Zm1.75-.25a.25.25 0 0 0-.25.25v7.5c0 .138.112.25.25.25h7.5a.25.25 0 0 0 .25-.25v-7.5a.25.25 0 0 0-.25-.25Z"/></svg>
<svg class="i" style="left:3882px;top:842.6px" width="28.8" height="28.8" viewBox="0 0 16 16" fill="#7d8590"><path d="M8 9a1.5 1.5 0 1 0 0-3 1.5 1.5 0 0 0 0 3ZM1.5 9a1.5 1.5 0 1 0 0-3 1.5 1.5 0 0 0 0 3Zm13 0a1.5 1.5 0 1 0 0-3 1.5 1.5 0 0 0 0 3Z"/></svg>
<span id="t42" class="t m" style="top:909.74px;font-size:21.6px;line-height:21.6px;color:#7d8590;left:61.5px;font-weight:700;">...</span>
<span id="t43" class="t m" style="top:909.74px;font-size:21.6px;line-height:21.6px;color:#7d8590;left:156px;">@@ -0,0 +1,12 @@</span>
<span id="t44" class="t m" style="top:952.94px;font-size:21.6px;line-height:21.6px;color:#e6edf3;right:1946.5px;">1</span>
<span id="t45" class="t m" style="top:952.94px;font-size:21.6px;line-height:21.6px;color:#e6edf3;left:2078.5px;">+ <span style="color:#7ee787">id</span>: <span style="color:#a5d6ff">hello_world</span></span>
<span id="t46" class="t m" style="top:988.94px;font-size:21.6px;line-height:21.6px;color:#e6edf3;right:1946.5px;">2</span>
<span id="t47" class="t m" style="top:988.94px;font-size:21.6px;line-height:21.6px;color:#e6edf3;left:2078.5px;">+ <span style="color:#7ee787">namespace</span>: <span style="color:#a5d6ff">prod</span></span>
<span id="t48" class="t m" style="top:1024.94px;font-size:21.6px;line-height:21.6px;color:#e6edf3;right:1946.5px;">3</span>
<span id="t49" class="t m" style="top:1024.94px;font-size:21.6px;line-height:21.6px;color:#e6edf3;left:2078.5px;">+</span>
<span id="t50" class="t m" style="top:1060.94px;font-size:21.6px;line-height:21.6px;color:#e6edf3;right:1946.5px;">4</span>
<span id="t51" class="t m" style="top:1060.94px;font-size:21.6px;line-height:21.6px;color:#e6edf3;left:2078.5px;">+ <span style="color:#7ee787">inputs</span>:</span>
<span id="t52" class="t m" style="top:1096.94px;font-size:21.6px;line-height:21.6px;color:#e6edf3;right:1946.5px;">5</span>
<span id="t53" class="t m" style="top:1096.94px;font-size:21.6px;line-height:21.6px;color:#e6edf3;left:2078.5px;">+   - <span style="color:#7ee787">id</span>: <span style="color:#a5d6ff">greeting</span></span>
<span id="t54" class="t m" style="top:1132.94px;font-size:21.6px;line-height:21.6px;color:#e6edf3;right:1946.5px;">6</span>
<span id="t55" class="t m" style="top:1132.94px;font-size:21.6px;line-height:21.6px;color:#e6edf3;left:2078.5px;">+     <span style="color:#7ee787">type</span>: <span style="color:#a5d6ff">STRING</span></span>
<span id="t56" class="t m" style="top:1168.94px;font-size:21.6px;line-height:21.6px;color:#e6edf3;right:1946.5px;">7</span>
<span id="t57" class="t m" style="top:1168.94px;font-size:21.6px;line-height:21.6px;color:#e6edf3;left:2078.5px;">+     <span style="color:#7ee787">defaults</span>: <span style="color:#a5d6ff">hey</span></span>
<span id="t58" class="t m" style="top:1204.94px;font-size:21.6px;line-height:21.6px;color:#e6edf3;right:1946.5px;">8</span>
<span id="t59" class="t m" style="top:1204.94px;font-size:21.6px;line-height:21.6px;color:#e6edf3;left:2078.5px;">+</span>
<span id="t60" class="t m" style="top:1240.94px;font-size:21.6px;line-height:21.6px;color:#e6edf3;right:1946.5px;">9</span>
<span id="t61" class="t m" style="top:1240.94px;font-size:21.6px;line-height:21.6px;color:#e6edf3;left:2078.5px;">+ <span style="color:#7ee787">tasks</span>:</span>
<span id="t62" class="t m" style="top:1276.94px;font-size:21.6px;line-height:21.6px;color:#e6edf3;right:1946.5px;">10</span>
<span id="t63" class="t m" style="top:1276.94px;font-size:21.6px;line-height:21.6px;color:#e6edf3;left:2078.5px;">+   - <span style="color:#7ee787">id</span>: <span style="color:#a5d6ff">welcome</span></span>
<span id="t64" class="t m" style="top:1312.94px;font-size:21.6px;line-height:21.6px;color:#e6edf3;right:1946.5px;">11</span>
<span id="t65" class="t m" style="top:1312.94px;font-size:21.6px;line-height:21.6px;color:#e6edf3;left:2078.5px;">+     <span style="color:#7ee787">type</span>: <span style="color:#a5d6ff">io.kestra.core.tasks.log.Log</span></span>
<span id="t66" class="t m" style="top:1348.94px;font-size:21.6px;line-height:21.6px;color:#e6edf3;right:1946.5px;">12</span>
<span id="t67" class="t m" style="top:1348.94px;font-size:21.6px;line-height:21.6px;color:#e6edf3;left:2078.5px;">+     <span style="color:#7ee787">message</span>: <span style="color:#a5d6ff">hi {{ inputs.greeting }}</span></span>
<svg class="i" style="left:2104px;top:1381.8px" width="28.8" height="28.8" viewBox="0 0 16 16" fill="#f85149"><path d="M4.25 7.25a.75.75 0 0 0 0 1.5h7.5a.75.75 0 0 0 0-1.5h-7.5ZM16 8A8 8 0 1 1 0 8a8 8 0 0 1 16 0Zm-1.5 0a6.5 6.5 0 1 0-13 0 6.5 6.5 0 0 0 13 0Z"/></svg>
<h3 id="t68" class="t" style="top:1452.32px;font-size:28.8px;line-height:28.8px;color:#e6edf3;left:44px;font-weight:700;letter-spacing:-0.118px;">0 comments on commit</h3>
<div style="left:371px;top:1446px;width:132px;height:43px;background:#161b22;border:1px solid #30363d;border-radius:6px;"></div>
<span id="t69" class="t m" style="top:1457.08px;font-size:25.6px;line-height:25.6px;color:#e6edf3;left:384px;">b604c8d</span>
<svg class="i" style="left:3712.6px;top:1450.5px" width="28.8" height="28.8" viewBox="0 0 16 16" fill="#e6edf3"><path d="M4 4a4 4 0 0 1 8 0v2h.25c.966 0 1.75.784 1.75 1.75v5.5A1.75 1.75 0 0 1 12.25 15h-8.5A1.75 1.75 0 0 1 2 13.25v-5.5C2 6.784 2.784 6 3.75 6H4Zm8.25 3.5h-8.5a.25.25 0 0 0-.25.25v5.5c0 .138.112.25.25.25h8.5a.25.25 0 0 0 .25-.25v-5.5a.25.25 0 0 0-.25-.25ZM10.5 6V4a2.5 2.5 0 1 0-5 0v2Z"/></svg>
<span id="t70" class="t" style="top:1456.72px;font-size:21.6px;line-height:21.6px;color:#e6edf3;left:3748px;font-weight:700;letter-spacing:0.074px;">Lock conversation</span>
<svg class="i" style="left:42.7px;top:1514.5px" width="75" height="75" viewBox="0 0 100 100"><defs><clipPath id="ave"><circle cx="50" cy="50" r="48.6"/></clipPath><filter id="ave-b" x="-10%" y="-10%" width="120%" height="120%"><feGaussianBlur stdDeviation="1.5"/></filter></defs><g clip-path="url(#ave)"><g filter="url(#ave-b)"><rect x="-5" y="-5" width="110" height="110" fill="#8b8680"/><rect x="-5" y="-5" width="110" height="53" fill="#557f40"/><rect x="-5" y="-5" width="110" height="29" fill="#33452b"/><path d="M-5 26H105V33H-5Z" fill="#6d9953"/><path d="M16 12 26 5 37 5 38 17 30 26 18 26Z" fill="#c4d3d6"/><path d="M68 13H88V23H68Z" fill="#bcc3c0"/><path d="M61 0H68L67 38H63Z" fill="#1f261c"/><path d="M22 10 38 32 35 34 19 13Z" fill="#1f2a1c"/><rect x="79.500" y="27" width="2.500" height="21" fill="#8e958c"/><path d="M-5 47H105V53H-5Z" fill="#7a786f"/><path d="M-5 75 34 73 34 84 -5 92Z" fill="#b4b1ab"/><path d="M37 15C39 3 55 0 60 11C64 22 63 36 67 47L36 47C40 36 35 27 37 15Z" fill="#dbbd8c"/><path d="M44 44 58 43 68 48 76 58 77 80 74 105 33 105 31 76 31 62 36 51Z" fill="#0c0c0f"/><path d="M45 40 60 40 64 66 61 67Z" fill="#eecbb5"/><path d="M38 40C36 50 33 60 38 70C43 69 46 60 45.500 50L46 40ZM60 38C62 46 70 55 72 65C70 70 66 69 64 66C62 58 60 52 58 46Z" fill="#dbbd8c"/><ellipse cx="51.500" cy="27" rx="8.800" ry="12" fill="#efcdb7"/><path d="M43.500 21C45 11 57 10 60 20C55 15.500 48 15.500 43.500 21Z" fill="#e2c190"/><path d="M47.500 33.500q4.500 3.500 9-0.500" stroke="#c4605c" stroke-width="1.600" fill="none"/><path d="M46.500 23.500h3.500M54 23h3.500" stroke="#8a6a55" stroke-width="1.200"/><rect x="56" y="80" width="12.500" height="4" fill="#cdc3ae"/></g></g><circle cx="50" cy="50" r="49.1" fill="none" stroke="#2a303a" stroke-width="1.800"/></svg>
<div class="comment-box" style="left:144.4px;top:1516px;width:3795.6px;height:349.5px;background:#0d1117;border:1px solid #30363d;border-radius:10.8px;overflow:hidden;"><div style="left:0;top:0;width:100%;height:68.600px;background:#161b22;border-bottom:1px solid #30363d;"></div><div style="left:-1.8px;top:-1.8px;width:121.2px;height:70.4px;background:#0d1117;border:1px solid #30363d;border-bottom:none;border-radius:10.8px 10.8px 0 0;"></div></div>
<span id="t71" class="t" style="top:1539.67px;font-size:25.2px;line-height:25.2px;color:#e6edf3;left:174px;-webkit-text-stroke:0.4px #e6edf3;letter-spacing:0.547px;">Write</span>
<span id="t72" class="t" style="top:1539.67px;font-size:25.2px;line-height:25.2px;color:#7d8590;left:294.4px;-webkit-text-stroke:0.4px #7d8590;letter-spacing:0.168px;">Preview</span>
<svg class="i" style="left:3138px;top:1537px" width="28.8" height="28.8" viewBox="0 0 16 16" fill="#7d8590"><path d="M3.75 2a.75.75 0 0 1 .75.75V7h7V2.75a.75.75 0 0 1 1.5 0v10.5a.75.75 0 0 1-1.5 0V8.5h-7v4.75a.75.75 0 0 1-1.5 0V2.75A.75.75 0 0 1 3.75 2Z"/></svg>
<svg class="i" style="left:3195.5px;top:1537px" width="28.8" height="28.8" viewBox="0 0 16 16" fill="#7d8590"><path d="M4 2h4.5a3.501 3.501 0 0 1 2.852 5.53A3.499 3.499 0 0 1 9.5 14H4a1 1 0 0 1-1-1V3a1 1 0 0 1 1-1Zm1 7v3h4.5a1.5 1.5 0 0 0 0-3Zm3.5-2a1.5 1.5 0 0 0 0-3H5v3Z"/></svg>
<svg class="i" style="left:3253.9px;top:1537px" width="28.8" height="28.8" viewBox="0 0 16 16" fill="#7d8590"><path d="M6 2.75A.75.75 0 0 1 6.75 2h6.5a.75.75 0 0 1 0 1.5h-2.505l-3.858 9H9.25a.75.75 0 0 1 0 1.5h-6.5a.75.75 0 0 1 0-1.5h2.505l3.858-9H6.75A.75.75 0 0 1 6 2.75Z"/></svg>
<svg class="i" style="left:3310.5px;top:1537px" width="28.8" height="28.8" viewBox="0 0 16 16" fill="#7d8590"><path d="M1.75 2.5h10.5a.75.75 0 0 1 0 1.5H1.75a.75.75 0 0 1 0-1.5Zm4 5h8.5a.75.75 0 0 1 0 1.5h-8.5a.75.75 0 0 1 0-1.5Zm0 5h8.5a.75.75 0 0 1 0 1.5h-8.5a.75.75 0 0 1 0-1.5ZM2.5 7.75v6a.75.75 0 0 1-1.5 0v-6a.75.75 0 0 1 1.5 0Z"/></svg>
<svg class="i" style="left:3369.4px;top:1537px" width="28.8" height="28.8" viewBox="0 0 16 16" fill="#7d8590"><path d="m11.28 3.22 4.25 4.25a.75.75 0 0 1 0 1.06l-4.25 4.25a.749.749 0 0 1-1.275-.326.749.749 0 0 1 .215-.734L13.94 8l-3.72-3.72a.749.749 0 0 1 .326-1.275.749.749 0 0 1 .734.215Zm-6.56 0a.751.751 0 0 1 1.042.018.751.751 0 0 1 .018 1.042L2.06 8l3.72 3.72a.749.749 0 0 1-.326 1.275.749.749 0 0 1-.734-.215L.47 8.53a.75.75 0 0 1 0-1.06Z"/></svg>
<svg class="i" style="left:3425.9px;top:1537px" width="28.8" height="28.8" viewBox="0 0 16 16" fill="#7d8590"><path d="m7.775 3.275 1.25-1.25a3.5 3.5 0 1 1 4.95 4.95l-2.5 2.5a3.5 3.5 0 0 1-4.95 0 .751.751 0 0 1 .018-1.042.751.751 0 0 1 1.042-.018 1.998 1.998 0 0 0 2.83 0l2.5-2.5a2.002 2.002 0 0 0-2.83-2.83l-1.25 1.25a.751.751 0 0 1-1.042-.018.751.751 0 0 1-.018-1.042Zm-4.69 9.64a1.998 1.998 0 0 0 2.83 0l1.25-1.25a.751.751 0 0 1 1.042.018.751.751 0 0 1 .018 1.042l-1.25 1.25a3.5 3.5 0 1 1-4.95-4.95l2.5-2.5a3.5 3.5 0 0 1 4.95 0 .751.751 0 0 1-.018 1.042.751.751 0 0 1-1.042.018 1.998 1.998 0 0 0-2.83 0l-2.5 2.5a1.998 1.998 0 0 0 0 2.83Z"/></svg>
<svg class="i" style="left:3513.6px;top:1537px" width="28.8" height="28.8" viewBox="0 0 16 16" fill="#7d8590"><path d="M5 3.25a.75.75 0 0 1 .75-.75h8.5a.75.75 0 0 1 0 1.5h-8.5A.75.75 0 0 1 5 3.25Zm0 5a.75.75 0 0 1 .75-.75h8.5a.75.75 0 0 1 0 1.5h-8.5A.75.75 0 0 1 5 8.25Zm0 5a.75.75 0 0 1 .75-.75h8.5a.75.75 0 0 1 0 1.5h-8.5a.75.75 0 0 1-.75-.75ZM.924 10.32a.5.5 0 0 1-.851-.525l.001-.001.001-.002.002-.004.007-.011c.097-.144.215-.273.348-.384.228-.19.588-.392 1.068-.392.468 0 .858.181 1.126.484.259.294.377.673.377 1.038 0 .987-.686 1.495-1.156 1.845l-.047.035c-.303.225-.522.4-.654.597h1.357a.5.5 0 0 1 0 1H.5a.5.5 0 0 1-.5-.5c0-1.005.692-1.52 1.167-1.875l.035-.025c.531-.396.8-.625.8-1.078a.57.57 0 0 0-.128-.376C1.806 10.068 1.695 10 1.5 10a.658.658 0 0 0-.429.163.835.835 0 0 0-.144.153ZM2.003 2.5V6h.503a.5.5 0 0 1 0 1H.5a.5.5 0 0 1 0-1h.503V3.308l-.28.14a.5.5 0 0 1-.446-.895l1.003-.5a.5.5 0 0 1 .723.447Z"/></svg>
<svg class="i" style="left:3571px;top:1537px" width="28.8" height="28.8" viewBox="0 0 16 16" fill="#7d8590"><path d="M5.75 2.5h8.5a.75.75 0 0 1 0 1.5h-8.5a.75.75 0 0 1 0-1.5Zm0 5h8.5a.75.75 0 0 1 0 1.5h-8.5a.75.75 0 0 1 0-1.5Zm0 5h8.5a.75.75 0 0 1 0 1.5h-8.5a.75.75 0 0 1 0-1.5ZM2 14a1 1 0 1 1 0-2 1 1 0 0 1 0 2Zm1-6a1 1 0 1 1-2 0 1 1 0 0 1 2 0ZM2 4a1 1 0 1 1 0-2 1 1 0 0 1 0 2Z"/></svg>
<svg class="i" style="left:3629.4px;top:1537px" width="28.8" height="28.8" viewBox="0 0 16 16" fill="#7d8590"><path d="M2 2h4a1 1 0 0 1 1 1v4a1 1 0 0 1-1 1H2a1 1 0 0 1-1-1V3a1 1 0 0 1 1-1Zm4.655 8.595a.75.75 0 0 1 0 1.06L4.03 14.28a.75.75 0 0 1-1.06 0l-1.5-1.5a.749.749 0 0 1 .326-1.275.749.749 0 0 1 .734.215l.97.97 2.095-2.095a.75.75 0 0 1 1.06 0ZM9.75 2.5h5.5a.75.75 0 0 1 0 1.5h-5.5a.75.75 0 0 1 0-1.5Zm0 5h5.5a.75.75 0 0 1 0 1.5h-5.5a.75.75 0 0 1 0-1.5Zm0 5h5.5a.75.75 0 0 1 0 1.5h-5.5a.75.75 0 0 1 0-1.5Zm-7.25-9v3h3v-3Z"/></svg>
<svg class="i" style="left:3715.6px;top:1537px" width="28.8" height="28.8" viewBox="0 0 16 16" fill="#7d8590"><path d="M12.212 3.02a1.753 1.753 0 0 0-2.478.003l-5.83 5.83a3.007 3.007 0 0 0-.88 2.127c0 .795.315 1.551.88 2.116.567.567 1.333.89 2.126.89.79 0 1.548-.321 2.116-.89l5.48-5.48a.75.75 0 0 1 1.061 1.06l-5.48 5.48a4.492 4.492 0 0 1-3.177 1.33c-1.2 0-2.345-.487-3.187-1.33a4.483 4.483 0 0 1-1.32-3.177c0-1.195.475-2.341 1.32-3.186l5.83-5.83a3.25 3.25 0 0 1 5.553 2.297c0 .863-.343 1.691-.953 2.301L7.439 12.39c-.375.377-.884.59-1.416.593a1.998 1.998 0 0 1-1.412-.593 1.992 1.992 0 0 1 0-2.828l5.48-5.48a.751.751 0 0 1 1.042.018.751.751 0 0 1 .018 1.042l-5.48 5.48a.492.492 0 0 0 0 .707.499.499 0 0 0 .352.154.51.51 0 0 0 .356-.154l5.833-5.827a1.755 1.755 0 0 0 0-2.481Z"/></svg>
<svg class="i" style="left:3773.6px;top:1537px" width="28.8" height="28.8" viewBox="0 0 16 16" fill="#7d8590"><path d="M4.75 2.37a6.501 6.501 0 0 0 6.5 11.26.75.75 0 0 1 .75 1.298A7.999 7.999 0 0 1 .989 4.148 8 8 0 0 1 16 7.75v1.5a2.75 2.75 0 0 1-5.072 1.475 3.999 3.999 0 0 1-6.65-4.19A4 4 0 0 1 12 8v1.25a1.25 1.25 0 0 0 2.5 0V7.867a6.5 6.5 0 0 0-9.75-5.496ZM10.5 8a2.5 2.5 0 1 0-5.001.001A2.5 2.5 0 0 0 10.5 8Z"/></svg>
<svg class="i" style="left:3831.1px;top:1537px" width="28.8" height="28.8" viewBox="0 0 16 16" fill="#7d8590"><path d="M2.75 3.5a.25.25 0 0 0-.25.25v7.5c0 .138.112.25.25.25h2a.75.75 0 0 1 .75.75v2.19l2.72-2.72a.749.749 0 0 1 .53-.22h4.5a.25.25 0 0 0 .25-.25v-2.5a.75.75 0 0 1 1.5 0v2.5A1.75 1.75 0 0 1 13.25 13H9.06l-2.573 2.573A1.458 1.458 0 0 1 4 14.543V13H2.75A1.75 1.75 0 0 1 1 11.25v-7.5C1 2.784 1.784 2 2.75 2h5.5a.75.75 0 0 1 0 1.5ZM16 1.25v4.146a.25.25 0 0 1-.427.177L14.03 4.03l-3.75 3.75a.749.749 0 0 1-1.275-.326.749.749 0 0 1 .215-.734l3.75-3.75-1.543-1.543A.25.25 0 0 1 11.604 1h4.146a.25.25 0 0 1 .25.25Z"/></svg>
<svg class="i" style="left:3888.6px;top:1537px" width="28.8" height="28.8" viewBox="0 0 16 16" fill="#7d8590"><path d="M6.78 1.97a.75.75 0 0 1 0 1.06L3.81 6h6.44A4.75 4.75 0 0 1 15 10.75v2.5a.75.75 0 0 1-1.5 0v-2.5a3.25 3.25 0 0 0-3.25-3.25H3.81l2.97 2.97a.749.749 0 0 1-.326 1.275.749.749 0 0 1-.734-.215L1.47 7.28a.75.75 0 0 1 0-1.06l4.25-4.25a.75.75 0 0 1 1.06 0Z"/></svg>
<div style="left:3484px;top:1536px;width:1px;height:30px;background:#30363d;"></div>
<div style="left:3686px;top:1536px;width:1px;height:30px;background:#30363d;"></div>
<div class="textarea" style="left:160px;top:1600px;width:3765px;height:186px;border:1px solid #30363d;border-radius:10.8px;background:#0d1117;"></div>
<span id="t73" class="t" style="top:1623.97px;font-size:25.2px;line-height:25.2px;color:#6e7681;left:176.4px;-webkit-text-stroke:0.4px #6e7681;letter-spacing:0.206px;">Leave a comment</span>
<svg class="i" style="left:3907.6px;top:1770.5px" width="16" height="16" viewBox="0 0 16 16"><path d="M14.500 1.500 1.500 14.500M14.500 8.500 8.500 14.500" stroke="#9aa0a6" stroke-width="1.800" fill="none"/></svg>
<svg class="i" style="left:174.7px;top:1811.3px" width="28.8" height="28.8" viewBox="0 0 16 16" fill="#7d8590"><path d="M14.85 3c.63 0 1.15.52 1.14 1.15v7.7c0 .63-.51 1.15-1.15 1.15H1.15C.52 13 0 12.48 0 11.84V4.15C0 3.52.52 3 1.15 3ZM9 11V5H7L5.5 7 4 5H2v6h2V8l1.5 1.92L7 8v3Zm2.99.5L14.5 8H13V5h-2v3H9.5Z"/></svg>
<span id="t74" class="t" style="top:1814.52px;font-size:21.6px;line-height:21.6px;color:#c9d1d9;left:212px;-webkit-text-stroke:0.7px #c9d1d9;letter-spacing:0.947px;">Markdown is supported</span>
<div style="left:484.6px;top:1800px;width:1px;height:50.4px;background:#21262d;"></div>
<svg class="i" style="left:514.8px;top:1811px" width="28.8" height="28.8" viewBox="0 0 16 16" fill="#7d8590"><path d="M16 13.25A1.75 1.75 0 0 1 14.25 15H1.75A1.75 1.75 0 0 1 0 13.25V2.75C0 1.784.784 1 1.75 1h12.5c.966 0 1.75.784 1.75 1.75ZM1.75 2.5a.25.25 0 0 0-.25.25v10.5c0 .138.112.25.25.25h.94l.03-.03 6.077-6.078a1.75 1.75 0 0 1 2.412-.06L14.5 10.31V2.75a.25.25 0 0 0-.25-.25Zm12.5 11a.25.25 0 0 0 .25-.25v-.917l-4.298-3.889a.25.25 0 0 0-.344.009L4.81 13.5ZM7 6a2 2 0 1 1-3.999.001A2 2 0 0 1 7 6ZM5.5 6a.5.5 0 1 0-1 0 .5.5 0 0 0 1 0Z"/></svg>
<span id="t75" class="t" style="top:1814.52px;font-size:21.6px;line-height:21.6px;color:#c9d1d9;left:552px;-webkit-text-stroke:0.7px #c9d1d9;letter-spacing:0.825px;">Paste, drop, or click to add files</span>
<div class="btn-primary" style="left:3597px;top:1881px;width:343px;height:57px;background:#135726;border-radius:10.8px;"></div>
<span id="t76" class="t" style="top:1897.07px;font-size:25.2px;line-height:25.2px;color:#7fa387;left:3620px;-webkit-text-stroke:0.8px #7fa387;letter-spacing:0.898px;">Comment on this commit</span>
</main>
</div></body></html>
